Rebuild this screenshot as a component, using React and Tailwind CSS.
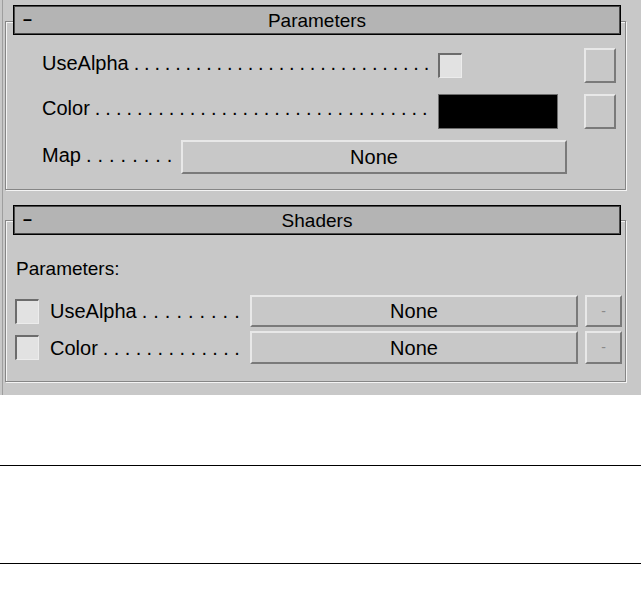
import React from 'react'

const FONT = "font-['Liberation_Sans',Arial,sans-serif]"

/* ── small bits of the old max-style UI ───────────────── */
function Dots({ n, track }) {
  return (
    <span className={`flex-1 min-w-0 overflow-hidden whitespace-nowrap ml-[5px] ${track}`}>
      {'.'.repeat(n)}
    </span>
  )
}

function Label({ text, n, track = 'tracking-[5px]', className = '' }) {
  return (
    <div className={`flex flex-1 min-w-0 items-center ${className}`}>
      <span className="shrink-0">{text}</span>
      <Dots n={n} track={track} />
    </div>
  )
}

function Check({ className = '' }) {
  return (
    <div className={`w-[24px] h-[25px] shrink-0 bg-[#e2e2e2] border-t-2 border-l-2 border-b border-r border-t-[#6c6c6c] border-l-[#6c6c6c] border-b-[#ececec] border-r-[#ececec] ${className}`} />
  )
}

function Raised({ className = '', children }) {
  return (
    <div className={`shrink-0 flex items-center justify-center bg-[#c8c8c8] border-t-2 border-l-2 border-b-2 border-r-2 border-t-[#e8e8e8] border-l-[#e8e8e8] border-b-[#7a7a7a] border-r-[#7a7a7a] ${className}`}>
      {children}
    </div>
  )
}

function Header({ title, className = '' }) {
  return (
    <div className={`grid grid-cols-[1fr_auto_1fr] items-center h-[30px] w-[608px] ml-[7px] bg-[#b4b4b4] border border-black shadow-[inset_1px_1px_0_#4a4a4a,inset_-1px_-1px_0_#4a4a4a] text-[19px] leading-none ${className}`}>
      <span className="pl-[9px] text-[16px] font-bold">–</span>
      <span>{title}</span>
      <span />
    </div>
  )
}

const FRAME = 'w-[621px] border border-[#868686] shadow-[inset_1px_1px_0_#f4f4f4,1px_1px_0_#f4f4f4]'

export default function App() {
  return (
    <div className={`${FONT} text-black bg-white min-h-[590px]`}>
      <div className="h-[395px] bg-[#c8c8c8] pl-[2px]">
        <div className="h-full border-l border-[#9e9e9e] pl-[2px] pt-[21px]">

          {/* Parameters rollout */}
          <div className={FRAME}>
            <Header title="Parameters" className="-mt-[17px]" />

            <div className="flex items-center h-[35px] mt-[13px] pl-[36px] pr-[9px] text-[20px]">
              <Label text="UseAlpha" n={29} track="tracking-[4.8px]" className="mb-[6px]" />
              <Check className="ml-[2px]" />
              <Raised className="ml-[122px] w-[32px] h-[35px]" />
            </div>

            <div className="flex items-center h-[35px] mt-[11px] pl-[36px] pr-[9px] text-[20px]">
              <Label text="Color" n={32} className="mb-[8px]" />
              <div className="ml-[2px] w-[120px] h-[35px] shrink-0 bg-black border border-[#6e6e6e]" />
              <Raised className="ml-[26px] w-[32px] h-[35px]" />
            </div>

            <div className="flex items-center h-[34px] mt-[11px] mb-[15px] pl-[36px] pr-[58px] text-[20px]">
              <Label text="Map" n={8} track="tracking-[6px]" className="mb-[5px]" />
              <Raised className="ml-[2px] w-[386px] h-[34px]">None</Raised>
            </div>
          </div>

          {/* Shaders rollout */}
          <div className={`${FRAME} mt-[30px]`}>
            <Header title="Shaders" className="-mt-[16px]" />

            <p className="mt-[23px] pl-[10px] text-[19px] leading-[22px]">Parameters:</p>

            <div className="flex items-center h-[32px] mt-[15px] pl-[9px] pr-[3px] text-[20px]">
              <Check />
              <Label text="UseAlpha" n={9} track="tracking-[6px]" className="ml-[11px]" />
              <Raised className="ml-[2px] w-[328px] h-[32px]">None</Raised>
              <Raised className="ml-[7px] w-[37px] h-[32px] text-[14px] text-[#8a8a8a]">-</Raised>
            </div>

            <div className="flex items-center h-[33px] mt-[4px] mb-[17px] pl-[9px] pr-[3px] text-[20px]">
              <Check />
              <Label text="Color" n={13} track="tracking-[5.4px]" className="ml-[11px]" />
              <Raised className="ml-[2px] w-[328px] h-[33px]">None</Raised>
              <Raised className="ml-[7px] w-[37px] h-[33px] text-[14px] text-[#8a8a8a]">-</Raised>
            </div>
          </div>

        </div>
      </div>

      <div className="h-px bg-black mt-[70px]" />
      <div className="h-px bg-black mt-[97px]" />
    </div>
  )
}
